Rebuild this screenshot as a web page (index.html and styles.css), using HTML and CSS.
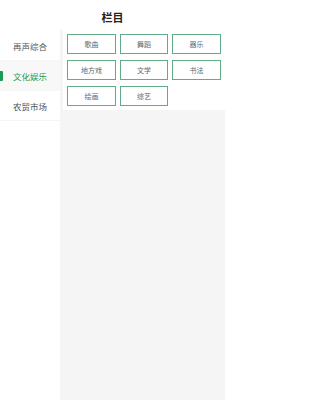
FILE: index.html
```html
<!DOCTYPE html>
<html lang="zh">
<head>
<meta charset="utf-8">
<link rel="stylesheet" href="styles.css">
</head>
<body>
<div class="page">
  <header class="header">栏目</header>
  <div class="main">
    <nav class="sidebar">
      <div class="nav-item">再声综合</div>
      <div class="nav-item active">文化娱乐</div>
      <div class="nav-item">农贸市场</div>
    </nav>
    <section class="content">
      <div class="panel">
        <div class="tag">歌曲</div>
        <div class="tag">舞蹈</div>
        <div class="tag">器乐</div>
        <div class="tag">地方戏</div>
        <div class="tag">文学</div>
        <div class="tag">书法</div>
        <div class="tag">绘画</div>
        <div class="tag">综艺</div>
      </div>
    </section>
  </div>
</div>
</body>
</html>
```

FILE: styles.css
```css
html, body {
  margin: 0;
  padding: 0;
  background: #ffffff;
}
body {
  font-family: "Noto Sans CJK SC", "Noto Sans", sans-serif;
}
.page {
  width: 225px;
  height: 400px;
  display: flex;
  flex-direction: column;
}
.header {
  height: 30px;
  line-height: 34px;
  text-align: center;
  font-size: 11px;
  font-weight: bold;
  color: #222;
  flex: none;
}
.main {
  flex: 1;
  display: flex;
}
.sidebar {
  width: 60px;
  flex: none;
  background: #fff;
  padding-top: 1px;
}
.nav-item {
  position: relative;
  height: 30px;
  line-height: 30px;
  text-align: center;
  font-size: 8.5px;
  color: #555;
  border-bottom: 1px solid #f6f6f6;
  box-sizing: border-box;
}
.nav-item.active {
  background: #f8f8f8;
  color: #1f9a55;
}
.nav-item.active::before {
  content: "";
  position: absolute;
  left: 0;
  top: 10px;
  width: 3px;
  height: 10px;
  background: #1a9b52;
  border-radius: 0 1px 1px 0;
}
.content {
  flex: 1;
  background: #f5f5f5;
  padding-left: 3px;
}
.panel {
  background: #fff;
  padding: 4px;
  display: grid;
  grid-template-columns: 49px 48px 49px;
  column-gap: 4px;
  row-gap: 6px;
}
.tag {
  height: 20px;
  box-sizing: border-box;
  border: 1px solid #62ad88;
  display: flex;
  align-items: center;
  justify-content: center;
  font-size: 7px;
  color: #666;
}
```
